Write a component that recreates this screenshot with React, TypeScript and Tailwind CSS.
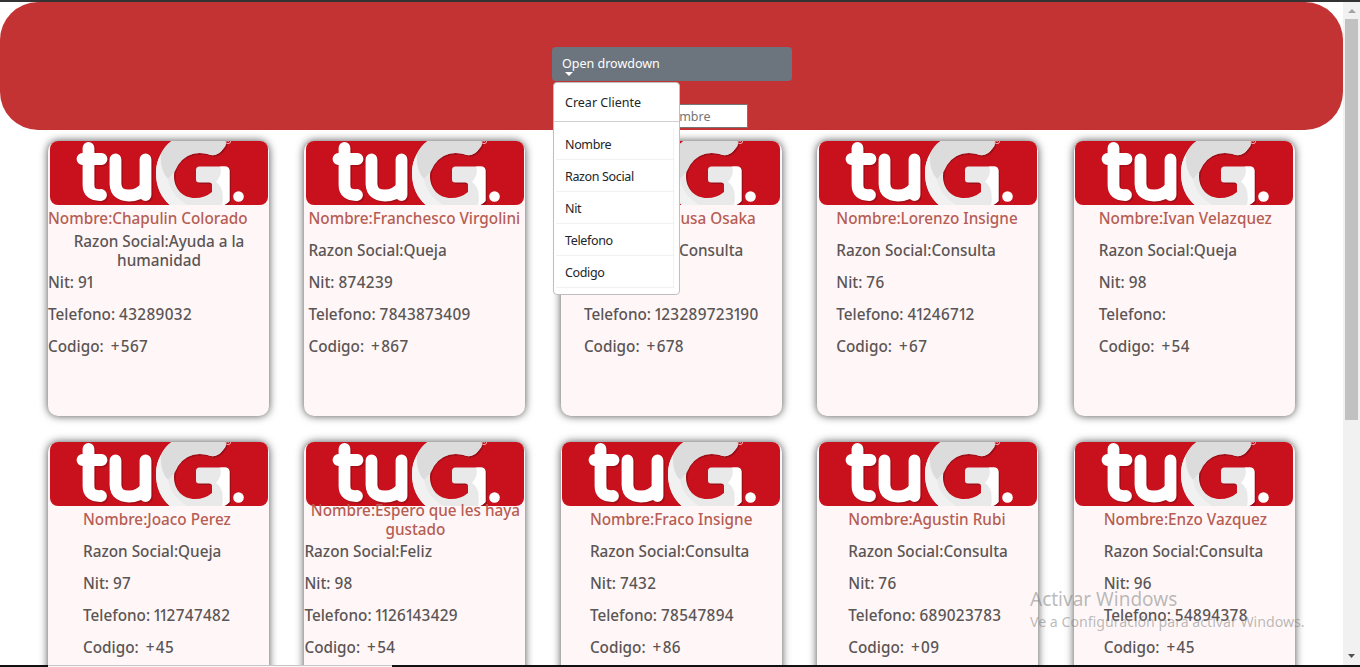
type Client = {
  name: string;
  reason: string;
  nit: string;
  phone: string;
  code: string;
  inset: string;
  wrapName?: boolean;
  wrapReason?: boolean;
};

const clients: Client[] = [
  { name: "Chapulin Colorado", reason: "Ayuda a la humanidad", nit: "91", phone: "43289032", code: "+567", inset: "pl-0", wrapReason: true },
  { name: "Franchesco Virgolini", reason: "Queja", nit: "874239", phone: "7843873409", code: "+867", inset: "pl-1" },
  { name: "Medusa Osaka", reason: "Consulta", nit: "89", phone: "123289723190", code: "+678", inset: "pl-[23px]" },
  { name: "Lorenzo Insigne", reason: "Consulta", nit: "76", phone: "41246712", code: "+67", inset: "pl-[19px]" },
  { name: "Ivan Velazquez", reason: "Queja", nit: "98", phone: "", code: "+54", inset: "pl-[25px]" },
  { name: "Joaco Perez", reason: "Queja", nit: "97", phone: "112747482", code: "+45", inset: "pl-[35px]" },
  { name: "Espero que les haya gustado", reason: "Feliz", nit: "98", phone: "1126143429", code: "+54", inset: "pl-0", wrapName: true },
  { name: "Fraco Insigne", reason: "Consulta", nit: "7432", phone: "78547894", code: "+86", inset: "pl-[29px]" },
  { name: "Agustin Rubi", reason: "Consulta", nit: "76", phone: "689023783", code: "+09", inset: "pl-[31px]" },
  { name: "Enzo Vazquez", reason: "Consulta", nit: "96", phone: "54894378", code: "+45", inset: "pl-[30px]" },
];

const G_SHAPE =
  "M121 65C111 57 106 46 106 32C106 18 113 6 123 -1H176Q177 4 173 8Q168 15 161 14Q153 11 144 12.500C132 15 124 24 124 35C124 48 133 57 145 57Q155 57 162 51V44Q162 41.500 159 41.500H149Q146 41.500 146 38.500V29Q146 25.500 149.500 25.500H175Q179.500 25.500 179.500 30V60Q177 63 172 65Z";

function Logo() {
  return (
    <svg viewBox="0 0 218 64" preserveAspectRatio="none" className="block h-16 w-full rounded-lg bg-[#c8111c]">
      <g fill="none" strokeLinecap="round" strokeLinejoin="round" strokeWidth="11.800">
        <g stroke="#a50d17" transform="translate(1.500 1.500)">
          <path d="M38.500 7V44Q38.500 54.500 51 54M32.500 18H51.500" />
          <path d="M65.500 18.500V43Q66 54.500 79 54.500Q90 54.500 95.500 46M95.500 18.500V54" />
        </g>
        <g stroke="#ffffff">
          <path d="M38.500 7V44Q38.500 54.500 51 54M32.500 18H51.500" />
          <path d="M65.500 18.500V43Q66 54.500 79 54.500Q90 54.500 95.500 46M95.500 18.500V54" />
        </g>
      </g>
      <path d={G_SHAPE} fill="#9c0e18" transform="translate(1.500 1.500)" />
      <path d={G_SHAPE} fill="#e9e9e9" />
      <path d="M111 13Q115 4 123 -1H176Q177 4 173 8Q168 15 161 14Q153 11 144 12.500Q131 16 125 30L118 38Q110 29 111 13Z" fill="#dcdcdc" />
      <path d="M106 32Q106 21 111 13Q109 29 118 38Q121 55 139 65H121Q106 52 106 32Z" fill="#f1f1f1" />
      <path d="M170 25.500H175Q179.500 25.500 179.500 30V60Q177 63 172 65Q175 46 166 41Q173 33 170 25.500Z" fill="#ffffff" />
      <circle cx="188.500" cy="55.500" r="5.300" fill="#ffffff" />
      <circle cx="178" cy="0" r="2.700" fill="none" stroke="#f1b6ba" strokeWidth="0.900" />
      <path d="M177 1V-1H179M178 0L179 1" fill="none" stroke="#f1b6ba" strokeWidth="0.700" />
    </svg>
  );
}

// Numbers are set with a narrow "1" and a wide plus sign.
function Digits({ value }: { value: string }) {
  return (
    <span className="tracking-[0.35px]">
      {value.split("").map((ch, i) => (
        <span key={i} className={ch === "1" ? "-mr-[1.9px] -ml-[1px]" : ch === "+" ? "mr-[1px] ml-[3px]" : ""}>
          {ch}
        </span>
      ))}
    </span>
  );
}

function Line({ text, digits, wrap, accent }: { text: string; digits?: string; wrap?: boolean; accent?: boolean }) {
  return (
    <div
      className={
        (wrap ? "w-[221px] justify-center pt-[2px] pl-px text-center " : "whitespace-nowrap ") +
        (accent ? "text-[#b65d54] " : "text-[#5b5555] ") +
        "flex h-8 items-center leading-[19px]"
      }
    >
      <span>
        {text}
        {digits !== undefined && <Digits value={digits} />}
      </span>
    </div>
  );
}

function Card({ c }: { c: Client }) {
  return (
    <article className="h-[275px] w-[221px] rounded-[10px] bg-[#fff7f7] shadow-[0_0_9px_0_rgba(0,0,0,0.7)]">
      <div className="pr-[1.500px] pl-[1.500px]">
        <Logo />
      </div>
      <div className={"relative -mt-[3px] text-[15.3px] font-medium " + c.inset}>
        <Line text={"Nombre:" + c.name} wrap={c.wrapName} accent />
        <Line text={"Razon Social:" + c.reason} wrap={c.wrapReason} />
        <Line text="Nit: " digits={c.nit} />
        <Line text="Telefono: " digits={c.phone} />
        <Line text="Codigo: " digits={c.code} />
      </div>
    </article>
  );
}

function Menu() {
  return (
    <div className="absolute top-[35px] left-px z-10 h-[213px] w-[127px] rounded border border-[#bfbfbf] bg-white text-[#212529]">
      <div className="flex h-[39px] items-center border-b border-[#cfcfcf] pt-[3px] pl-[11px]">Crear Cliente</div>
      <div className="mt-[6px] mr-[5px] ml-[2px] tracking-[-0.35px]">
        {["Nombre", "Razon Social", "Nit", "Telefono", "Codigo"].map((item) => (
          <div key={item} className="flex h-8 items-center border-r border-b border-[#f0f1f3] pt-[3px] pl-[9px]">
            {item}
          </div>
        ))}
      </div>
    </div>
  );
}

export default function App() {
  return (
    <div className="relative flex h-[667px] w-[1360px] flex-col overflow-hidden bg-white font-['Noto_Sans',sans-serif]">
      <div className="h-[2px] shrink-0 bg-[#333333]" />
      <div className="flex h-[663px] shrink-0">
        <main className="w-[1343px] overflow-hidden">
          <header className="flex h-32 flex-col items-center rounded-[38px] bg-[#c43333] pt-[45px] text-[12.5px]">
            <div className="relative ml-px h-[34px] w-60">
              <button className="flex h-full w-full flex-col items-start rounded bg-[#6c757d] pt-[7px] pl-[10px] text-left leading-[19px] text-white">
                <span>Open drowdown</span>
                <svg viewBox="0 0 8 4" className="-mt-[1px] ml-[3px] h-1 w-2">
                  <path d="M0 0H8L4 4Z" fill="#ffffff" />
                </svg>
              </button>
              <Menu />
            </div>
            <div className="mt-[23px] ml-px flex h-[24px] w-[151px] items-center justify-end border border-[#767676] bg-white pt-[3px] pr-9 text-[#757575]">
              Nombre
            </div>
          </header>
          <section className="grid grid-cols-[repeat(5,256.45px)] gap-y-[26px] pt-[11px] pl-12">
            {clients.map((c) => (
              <Card key={c.name} c={c} />
            ))}
          </section>
        </main>
        <aside className="flex w-[17px] flex-col items-center bg-[#f1f1f1]">
          <svg viewBox="0 0 17 17" className="h-[17px] w-[17px]">
            <path d="M5 11H13L9 7Z" fill="#a3a3a3" />
          </svg>
          <div className="h-[401px] w-[13px] bg-[#c1c1c1]" />
          <svg viewBox="0 0 17 17" className="mt-auto h-[17px] w-[17px]">
            <path d="M5 6H12L8.500 10Z" fill="#505050" />
          </svg>
        </aside>
      </div>
      <div className="flex h-[2px] shrink-0 bg-[#111111] pl-12">
        <div className="w-[344px] border-t border-[#c5c5c5] bg-[#f8f8f8]" />
      </div>
      <div className="absolute top-[587px] left-[1030px] text-[#77777780]">
        <div className="text-[19px] leading-6">Activar Windows</div>
        <div className="text-[14.150px] leading-[22px] whitespace-nowrap">Ve a Configuración para activar Windows.</div>
      </div>
    </div>
  );
}
